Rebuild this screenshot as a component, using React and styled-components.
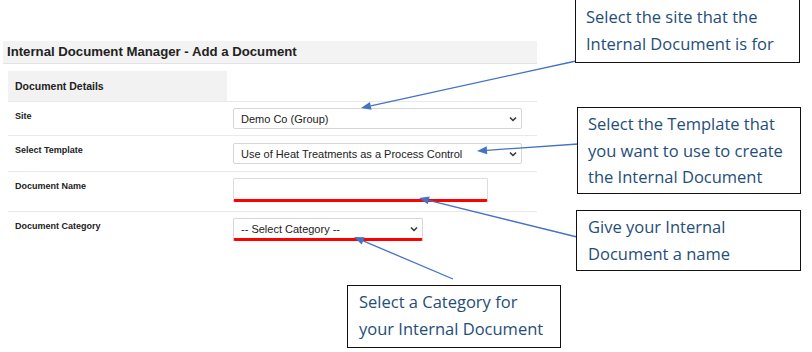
import React from "react";
import styled, { createGlobalStyle } from "styled-components";

const GlobalStyle = createGlobalStyle`
  html, body { margin: 0; padding: 0; background: #ffffff; }
  body { font-family: "Liberation Sans", Arial, sans-serif; }
`;

const Page = styled.div`
  position: relative;
  width: 812px;
  height: 352px;
  overflow: hidden;
  background: #ffffff;
`;

const Panel = styled.div`
  padding: 41px 0 0 3px;
  width: 534px;
`;

const TitleBar = styled.div`
  height: 22px;
  line-height: 21px;
  background: #f3f3f3;
  border-bottom: 1px solid #e3e3e3;
  padding-left: 4px;
  font-size: 13.2px;
  font-weight: bold;
  color: #222;
`;

const Table = styled.div`
  margin: 7px 0 0 5px;
  width: 529px;
`;

const HeaderRow = styled.div`
  display: grid;
  grid-template-columns: 219px 1fr;
  height: 30px;
`;

const HeaderCell = styled.div`
  background: #f2f2f2;
  padding-left: 7px;
  line-height: 30px;
  font-size: 10.5px;
  font-weight: bold;
  color: #222;
`;

const Row = styled.div`
  display: grid;
  grid-template-columns: 225px 1fr;
  height: ${(p) => p.$h}px;
  border-top: 1px solid #e9e9e9;
  box-sizing: border-box;
`;

const Label = styled.div`
  padding: 8px 0 0 7px;
  font-size: 9px;
  line-height: 12px;
  font-weight: bold;
  color: #222;
`;

const FieldCell = styled.div`
  padding-top: ${(p) => p.$pt || 6}px;
`;

const SelectBox = styled.div`
  box-sizing: border-box;
  width: ${(p) => p.$w}px;
  height: ${(p) => (p.$flag ? 23 : 21)}px;
  border: 1px solid #d6d6d6;
  border-bottom: ${(p) => (p.$flag ? "3px solid #ff0000" : "1px solid #d6d6d6")};
  border-radius: 2px;
  background: #fff;
  display: flex;
  align-items: center;
  justify-content: space-between;
  padding: 0 3px 0 7px;
  font-size: 11px;
  color: #222;
`;

const InputBox = styled.div`
  box-sizing: border-box;
  width: ${(p) => p.$w}px;
  height: 24px;
  border: 1px solid #dcdcdc;
  border-bottom: 3px solid #ff0000;
  border-radius: 2px;
  background: #fff;
`;

const Callout = styled.div`
  position: absolute;
  box-sizing: border-box;
  left: ${(p) => p.$x}px;
  top: ${(p) => p.$y}px;
  width: ${(p) => p.$w}px;
  height: ${(p) => p.$h}px;
  border: 1.5px solid #111;
  background: #fff;
  padding: ${(p) => p.$pt}px 0 0 ${(p) => p.$pl}px;
  font-family: "Open Sans", "Noto Sans", sans-serif;
  font-size: 16.5px;
  line-height: 26.5px;
  color: #1f4e79;
  white-space: nowrap;
`;

const Overlay = styled.svg`
  position: absolute;
  left: 0;
  top: 0;
  width: 812px;
  height: 352px;
  pointer-events: none;
`;

const Chevron = () => (
  <svg width="10" height="10" viewBox="0 0 10 10">
    <path d="M2 3.5 L5 6.5 L8 3.5" fill="none" stroke="#333" strokeWidth="1.5" />
  </svg>
);

const Arrow = ({ x1, y1, x2, y2 }) => {
  const dx = x2 - x1;
  const dy = y2 - y1;
  const len = Math.hypot(dx, dy);
  const ux = dx / len;
  const uy = dy / len;
  const hl = 10;
  const hw = 4;
  const bx = x2 - ux * hl;
  const by = y2 - uy * hl;
  const px = -uy;
  const py = ux;
  return (
    <g>
      <line x1={x1} y1={y1} x2={bx} y2={by} stroke="#4472c4" strokeWidth="1.3" />
      <polygon
        points={`${x2},${y2} ${bx + px * hw},${by + py * hw} ${bx - px * hw},${by - py * hw}`}
        fill="#4472c4"
      />
    </g>
  );
};

export default function App() {
  return (
    <Page>
      <GlobalStyle />
      <Panel>
        <TitleBar>Internal Document Manager - Add a Document</TitleBar>
        <Table>
          <HeaderRow>
            <HeaderCell>Document Details</HeaderCell>
            <div />
          </HeaderRow>
          <Row $h={34}>
            <Label>Site</Label>
            <FieldCell $pt={6}>
              <SelectBox $w={289}>
                <span>Demo Co (Group)</span>
                <Chevron />
              </SelectBox>
            </FieldCell>
          </Row>
          <Row $h={36}>
            <Label>Select Template</Label>
            <FieldCell $pt={7}>
              <SelectBox $w={289}>
                <span>Use of Heat Treatments as a Process Control</span>
                <Chevron />
              </SelectBox>
            </FieldCell>
          </Row>
          <Row $h={40}>
            <Label>Document Name</Label>
            <FieldCell $pt={6}>
              <InputBox $w={255} />
            </FieldCell>
          </Row>
          <Row $h={40}>
            <Label>Document Category</Label>
            <FieldCell $pt={6}>
              <SelectBox $w={190} $flag>
                <span>-- Select Category --</span>
                <Chevron />
              </SelectBox>
            </FieldCell>
          </Row>
        </Table>
      </Panel>

      <Overlay viewBox="0 0 812 352">
        <Arrow x1={576} y1={61} x2={361} y2={108} />
        <Arrow x1={578} y1={144} x2={477} y2={151} />
        <Arrow x1={577} y1={237} x2={419} y2={198} />
        <Arrow x1={453} y1={279} x2={354} y2={237} />
      </Overlay>

      <Callout $x={575} $y={-10} $w={225} $h={73} $pt={13} $pl={10}>
        Select the site that the
        <br />
        Internal Document is for
      </Callout>
      <Callout $x={577} $y={107} $w={224} $h={87} $pt={3} $pl={10}>
        Select the Template that
        <br />
        you want to use to create
        <br />
        the Internal Document
      </Callout>
      <Callout $x={576} $y={210} $w={225} $h={61} $pt={3} $pl={11}>
        Give your Internal
        <br />
        Document a name
      </Callout>
      <Callout $x={347} $y={285} $w={214} $h={63} $pt={3} $pl={11}>
        Select a Category for
        <br />
        your Internal Document
      </Callout>
    </Page>
  );
}
